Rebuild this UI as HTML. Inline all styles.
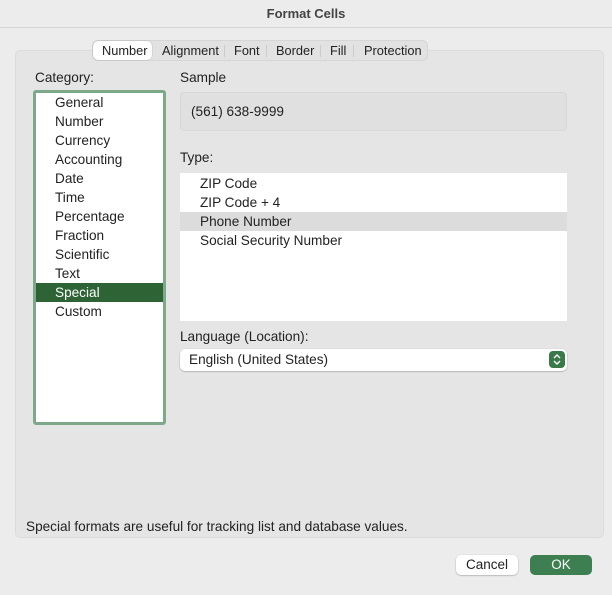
<!DOCTYPE html>
<html><head><style>
*{margin:0;padding:0;box-sizing:border-box}
body{width:612px;height:595px;background:#ececec;font-family:"Liberation Sans",sans-serif;font-size:13.6px;color:#222;position:relative;overflow:hidden}
.a{position:absolute}
.title{left:0;top:0;width:612px;height:28px;border-bottom:1px solid #d4d4d4;text-align:center;font-weight:bold;font-size:13px;line-height:28px;color:#444;background:#ececec}
.panel{left:15px;top:50px;width:589px;height:488px;background:#e5e5e5;border:1px solid #dcdcdc;border-radius:5px}
.tabs{left:92px;top:40px;width:336px;height:21px;background:#e2e2e2;border:1px solid #d6d6d6;border-radius:6px}
.tab{position:absolute;top:2px;line-height:17px;font-size:12.8px}
.sel{left:93px;top:41px;width:59px;height:19px;background:#fff;border-radius:5px;box-shadow:0 0 1px rgba(0,0,0,.4)}
.cat{left:33px;top:90px;width:133px;height:335px;background:#fff;border:3px solid #7ea88a;border-radius:3px}
.cat div{height:19px;line-height:19px;padding-left:19px}
.cat .hl{background:#2e6335;color:#fff}
.list{left:180px;top:173px;width:387px;height:148px;background:#fff}
.list div{height:19px;line-height:19px;padding-left:20px}
</style></head><body>
<div class="a title">Format Cells</div>
<div class="a panel"></div>
<div class="a tabs"></div>
<div class="a sel"></div>
<span class="a tab" style="left:102px;top:42px">Number</span>
<span class="a tab" style="left:162px;top:42px">Alignment</span>
<span class="a" style="left:224px;top:45px;width:1px;height:12px;background:#ccc"></span>
<span class="a tab" style="left:234px;top:42px">Font</span>
<span class="a" style="left:266px;top:45px;width:1px;height:12px;background:#ccc"></span>
<span class="a tab" style="left:276px;top:42px">Border</span>
<span class="a" style="left:320px;top:45px;width:1px;height:12px;background:#ccc"></span>
<span class="a tab" style="left:330px;top:42px">Fill</span>
<span class="a" style="left:353px;top:45px;width:1px;height:12px;background:#ccc"></span>
<span class="a tab" style="left:364px;top:42px">Protection</span>

<div class="a" style="left:35px;top:70px">Category:</div>
<div class="a cat">
<div>General</div><div>Number</div><div>Currency</div><div>Accounting</div><div>Date</div><div>Time</div><div>Percentage</div><div>Fraction</div><div>Scientific</div><div>Text</div><div class="hl">Special</div><div>Custom</div>
</div>

<div class="a" style="left:180px;top:70px">Sample</div>
<div class="a" style="left:180px;top:92px;width:387px;height:39px;background:#e0e0e0;border:1px solid #d8d8d8;border-radius:4px;padding-left:10px;line-height:38px">(561) 638-9999</div>

<div class="a" style="left:180px;top:150px">Type:</div>
<div class="a list" style="padding-top:1px">
<div>ZIP Code</div><div>ZIP Code + 4</div><div style="background:#dcdcdc">Phone Number</div><div>Social Security Number</div>
</div>

<div class="a" style="left:180px;top:329px">Language (Location):</div>
<div class="a" style="left:180px;top:349px;width:387px;height:22px;background:#fff;border-radius:5px;box-shadow:0 0.5px 1.5px rgba(0,0,0,.35);padding-left:9px;line-height:21px">English (United States)</div>
<div class="a" style="left:549px;top:351px;width:16px;height:17px;background:#3a7a4a;border-radius:4px">
<svg width="16" height="17" viewBox="0 0 16 17"><path d="M5 7l3-3 3 3M5 10l3 3 3-3" fill="none" stroke="#fff" stroke-width="1.4"/></svg></div>

<div class="a" style="left:26px;top:519px">Special formats are useful for tracking list and database values.</div>

<div class="a" style="left:456px;top:555px;width:62px;height:20px;background:#fff;border-radius:5px;box-shadow:0 0.5px 1.5px rgba(0,0,0,.35);text-align:center;line-height:20px;font-size:13.5px">Cancel</div>
<div class="a" style="left:530px;top:555px;width:62px;height:20px;background:#3d7f50;border-radius:5px;text-align:center;line-height:20px;color:#fff;font-size:13.5px">OK</div>
</body></html>
